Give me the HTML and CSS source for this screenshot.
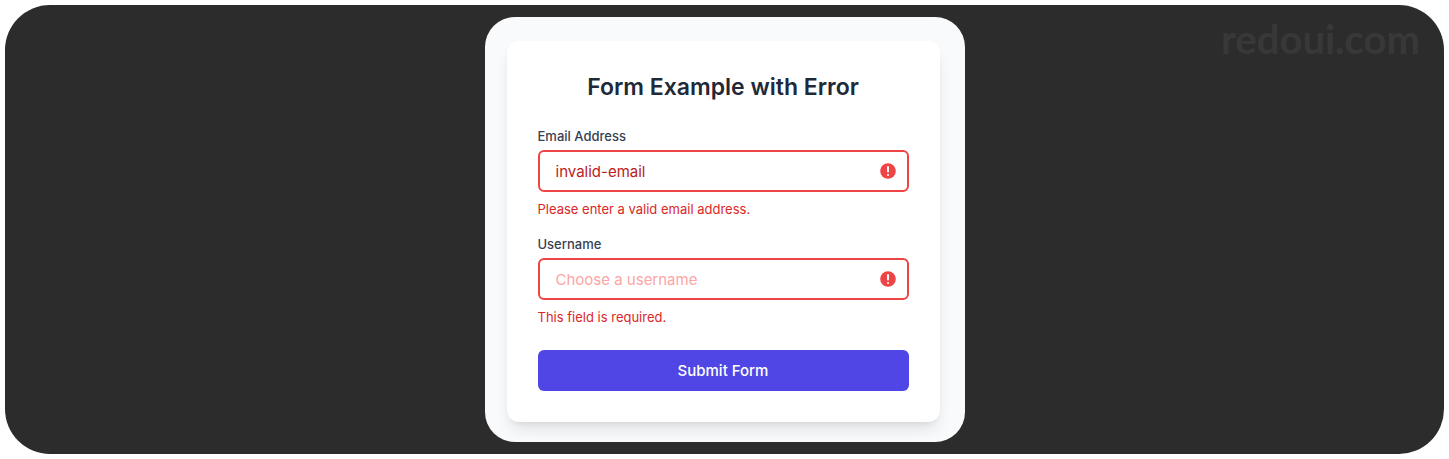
FILE: index.html
```html
<!DOCTYPE html>
<html lang="en">
<head>
<meta charset="utf-8">
<meta name="viewport" content="width=device-width, initial-scale=1">
<title>Form Example with Error</title>
<link rel="stylesheet" href="styles.css">
</head>
<body>
<main class="stage">
  <span class="watermark">redoui.com</span>
  <section class="preview">
    <form class="card" novalidate>
      <h1 class="title">Form Example with Error</h1>
      <div class="field">
        <label class="label" for="email">Email Address</label>
        <div class="control">
          <input class="input" type="email" id="email" value="invalid-email" aria-invalid="true" aria-describedby="email-error">
          <svg class="icon" viewBox="0 0 16 16" aria-hidden="true"><circle cx="8" cy="8" r="7.8" fill="#ef4444"/><path d="M8 4v4.6" stroke="#fff" stroke-width="2" stroke-linecap="round"/><circle cx="8" cy="12" r="1.1" fill="#fff"/></svg>
        </div>
        <p class="error" id="email-error">Please enter a valid email address.</p>
      </div>
      <div class="field">
        <label class="label" for="username">Username</label>
        <div class="control">
          <input class="input" type="text" id="username" placeholder="Choose a username" aria-invalid="true" aria-describedby="username-error">
          <svg class="icon" viewBox="0 0 16 16" aria-hidden="true"><circle cx="8" cy="8" r="7.8" fill="#ef4444"/><path d="M8 4v4.6" stroke="#fff" stroke-width="2" stroke-linecap="round"/><circle cx="8" cy="12" r="1.1" fill="#fff"/></svg>
        </div>
        <p class="error" id="username-error">This field is required.</p>
      </div>
      <button class="submit" type="submit">Submit Form</button>
    </form>
  </section>
</main>
</body>
</html>
```
FILE: styles.css
```css
* {
  box-sizing: border-box;
}

body {
  margin: 0;
  padding: 5px;
  background: #fff;
  font-family: Inter, "Liberation Sans", sans-serif;
}

.stage {
  position: relative;
  display: flex;
  justify-content: center;
  padding: 12px;
  border-radius: 45px;
  background: #2c2c2c;
}

.watermark {
  position: absolute;
  top: 10px;
  right: 24px;
  color: #383838;
  font-family: Lato, sans-serif;
  font-size: 40px;
  font-weight: 700;
  line-height: 48px;
}

.preview {
  width: 100%;
  max-width: 480px;
  padding: 24px 25px 20px 22px;
  border-radius: 30px;
  background: #f9fafb;
  overflow: hidden;
}

.card {
  padding: 31px;
  border-radius: 12px;
  background: #fff;
  box-shadow: 0 10px 15px -3px rgba(0, 0, 0, 0.1), 0 4px 6px -4px rgba(0, 0, 0, 0.1);
}

.title {
  margin: 0 0 24px;
  color: #1f2937;
  font-size: 23px;
  font-weight: 600;
  line-height: 30px;
  text-align: center;
}

.field {
  margin-bottom: 15px;
}

.label {
  display: block;
  margin-bottom: 4px;
  color: #374151;
  font-size: 13px;
  font-weight: 500;
  line-height: 20px;
}

.control {
  position: relative;
}

.input {
  display: block;
  width: 100%;
  height: 42px;
  padding: 0 40px 0 16px;
  border: 2px solid #ef4444;
  border-radius: 6px;
  background: #fff;
  color: #b91c1c;
  font-family: inherit;
  font-size: 15px;
}

.input::placeholder {
  color: #fca5a5;
  opacity: 1;
}

.icon {
  position: absolute;
  top: 13px;
  right: 13px;
  width: 16px;
  height: 16px;
}

.error {
  margin: 7px 0 0;
  color: #dc2626;
  font-size: 13px;
  line-height: 20px;
}

.submit {
  display: block;
  width: 100%;
  height: 41px;
  margin-top: 23px;
  padding: 0;
  border: 0;
  border-radius: 6px;
  background: #4f46e5;
  color: #fff;
  font-family: inherit;
  font-size: 15px;
  font-weight: 500;
}
```
